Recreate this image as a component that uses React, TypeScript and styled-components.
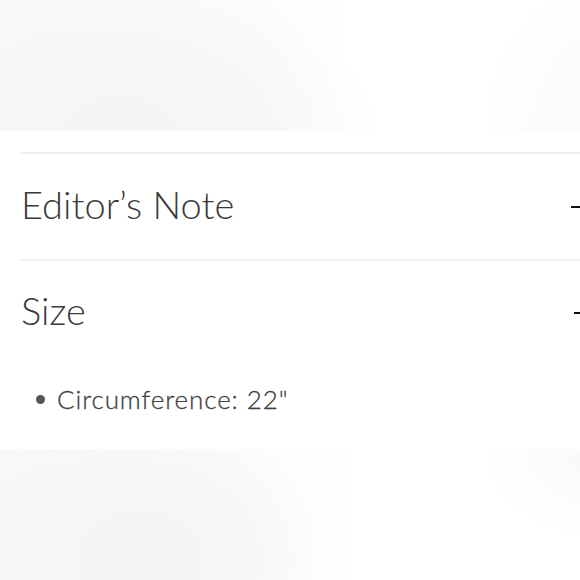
import styled, { createGlobalStyle } from "styled-components";

const GlobalStyle = createGlobalStyle`
  html, body {
    margin: 0;
    padding: 0;
    background: #ffffff;
    overflow: hidden;
  }
`;

const Page = styled.div`
  width: 580px;
  height: 580px;
  display: flex;
  flex-direction: column;
  font-family: Lato, "Open Sans", sans-serif;
`;

const Backdrop = styled.div<{ $bottom?: boolean }>`
  height: 131px;
  flex: none;
  background: ${(p) =>
    p.$bottom
      ? `radial-gradient(ellipse 190px 140px at 140px 110px, #f4f4f4 0%, #f6f6f6 50%, rgba(255,255,255,0) 100%),
         radial-gradient(ellipse 120px 90px at 600px 0px, #f8f8f8 0%, rgba(255,255,255,0) 100%),
         linear-gradient(90deg, #f8f8f8 0%, #fbfbfb 40%, #ffffff 62%, #ffffff 100%)`
      : `radial-gradient(ellipse 260px 170px at 120px 140px, #f4f4f4 0%, #f7f7f7 55%, rgba(255,255,255,0) 100%),
         radial-gradient(ellipse 140px 160px at 620px 130px, #f8f8f8 0%, rgba(255,255,255,0) 100%),
         linear-gradient(90deg, #f9f9f9 0%, #fcfcfc 45%, #ffffff 60%, #ffffff 100%)`};
`;

const Panel = styled.section`
  flex: 1;
  background: #ffffff;
  padding: 21px 0 0 21px;
  box-sizing: border-box;
`;

const Item = styled.div`
  border-top: 2px solid #efefef;
`;

const Header = styled.div<{ $height: number }>`
  height: ${(p) => p.$height}px;
  display: flex;
  align-items: center;
  justify-content: space-between;
`;

const Title = styled.h2`
  margin: 0 0 6px;
  font-size: 38px;
  font-weight: 300;
  color: #3a3a3a;
`;

const Minus = styled.span<{ $shift: number }>`
  width: 16px;
  height: 2px;
  background: #111111;
  margin-right: ${(p) => -7 - p.$shift}px;
`;

const List = styled.ul`
  margin: 0;
  padding: 18px 0 0 15px;
  list-style: none;
`;

const Bullet = styled.li`
  display: flex;
  align-items: center;
  gap: 12px;
  font-size: 26px;
  font-weight: 300;
  color: #3f3f3f;
  letter-spacing: 0.9px;
  -webkit-text-stroke: 0.3px #3f3f3f;

  &::before {
    content: "";
    width: 9px;
    height: 9px;
    border-radius: 50%;
    background: #555555;
    flex: none;
  }
`;

export default function App() {
  return (
    <Page>
      <GlobalStyle />
      <Backdrop />
      <Panel>
        <Item>
          <Header $height={105}>
            <Title>Editor’s Note</Title>
            <Minus $shift={0} />
          </Header>
        </Item>
        <Item>
          <Header $height={104}>
            <Title>Size</Title>
            <Minus $shift={3} />
          </Header>
          <List>
            <Bullet>Circumference: 22"</Bullet>
          </List>
        </Item>
      </Panel>
      <Backdrop $bottom />
    </Page>
  );
}
